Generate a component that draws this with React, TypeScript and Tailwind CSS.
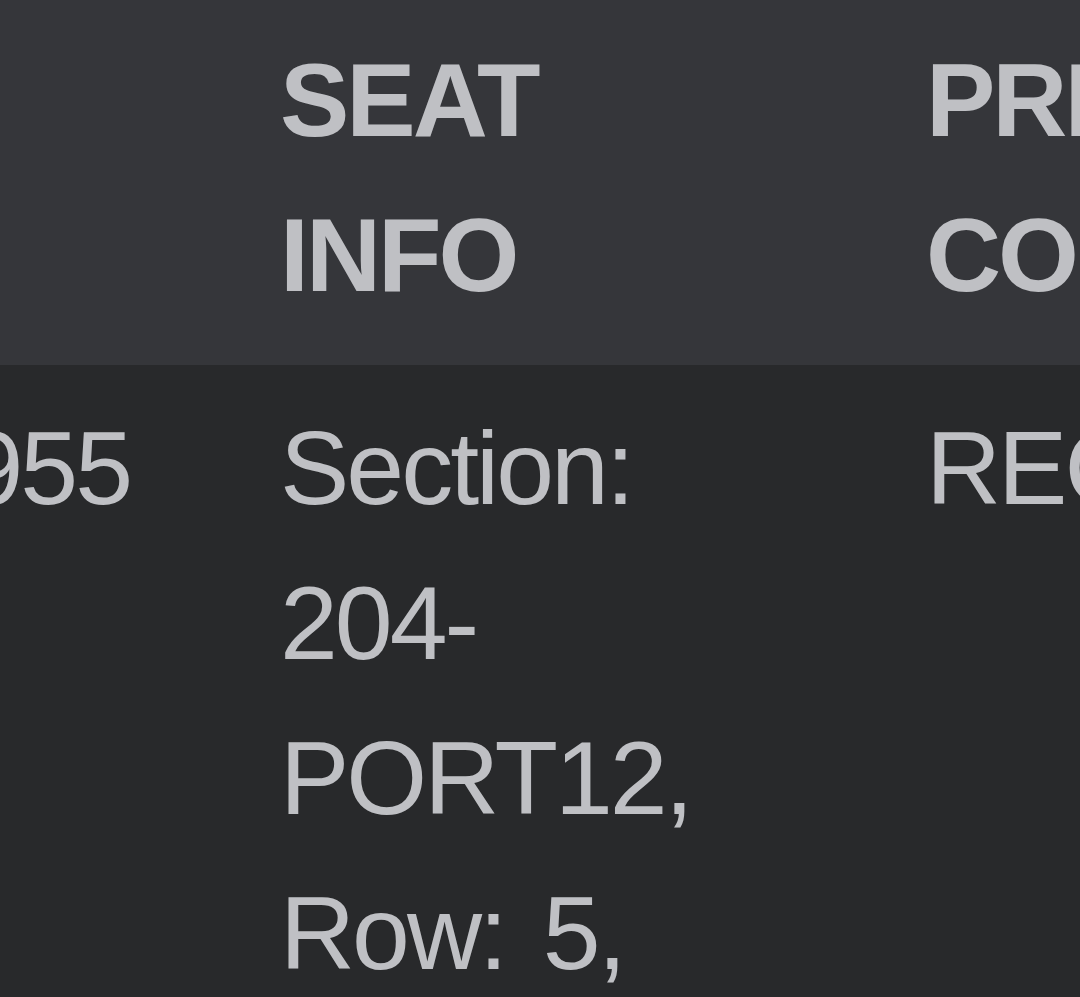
import React from 'react';

interface Ticket {
  orderId: string;
  seatInfo: string;
  priceCode: string;
}

const tickets: Ticket[] = [
  {
    orderId: '30419955',
    seatInfo: 'Section: 204-PORT12, Row: 5, Seat: 11',
    priceCode: 'REGULAR',
  },
];

const App: React.FC = () => {
  return (
    <div className="w-[1080px] h-[997px] overflow-hidden bg-[#28292b] font-['Liberation_Sans',Arial,sans-serif] text-[104px] leading-[155px] tracking-[-3px] text-[#bfc0c4]">
      <table className="table-fixed w-[1497px] border-collapse text-left">
        <colgroup>
          <col className="w-[205px]" />
          <col className="w-[646px]" />
          <col className="w-[646px]" />
        </colgroup>
        <thead className="bg-[#35363a]">
          <tr>
            <th className="pr-[75px] pt-[23px] pb-[32px] align-top font-bold">
              {/* order # column, cut off on the left */}
              <div className="flex justify-end whitespace-nowrap">&nbsp;</div>
            </th>
            <th className="px-[75px] pt-[23px] pb-[32px] align-top font-bold uppercase">Seat Info</th>
            <th className="px-[75px] pt-[23px] pb-[32px] align-top font-bold uppercase">Price Code</th>
          </tr>
        </thead>
        <tbody>
          {tickets.map((t) => (
            <tr key={t.orderId}>
              <td className="pr-[75px] pt-[26px] align-top">
                <div className="flex justify-end whitespace-nowrap">{t.orderId}</div>
              </td>
              <td className="px-[75px] pt-[26px] align-top [word-spacing:12px]">{t.seatInfo}</td>
              <td className="px-[75px] pt-[26px] align-top">{t.priceCode}</td>
            </tr>
          ))}
        </tbody>
      </table>
    </div>
  );
};

export default App;
